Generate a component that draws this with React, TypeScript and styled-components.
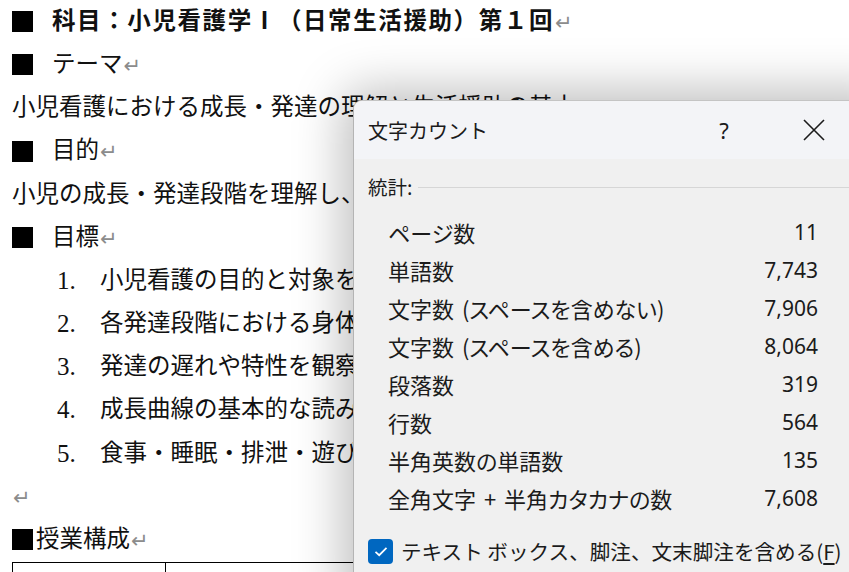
import React from 'react';
import styled, { createGlobalStyle } from 'styled-components';

const GlobalStyle = createGlobalStyle`
  html, body {
    margin: 0;
    padding: 0;
    background: #fff;
    overflow: hidden;
  }
`;

const Page = styled.div`
  position: relative;
  width: 849px;
  height: 572px;
  overflow: hidden;
  background: #fff;
`;

const Doc = styled.div`
  padding-left: 12px;
  font-family: 'Liberation Serif', 'Noto Sans CJK JP', serif;
  font-size: 23.5px;
  line-height: 43.17px;
  color: #111;
  white-space: nowrap;
`;

const Line = styled.div<{ bold?: boolean }>`
  display: flex;
  align-items: center;
  height: 43.17px;
  font-weight: ${({ bold }) => (bold ? 700 : 400)};
  letter-spacing: ${({ bold }) => (bold ? '1.6px' : '0')};
`;

const Mark = styled.span<{ tight?: boolean }>`
  display: inline-block;
  width: 21px;
  height: 21px;
  margin-right: ${({ tight }) => (tight ? '3px' : '19px')};
  font-size: 0;
  background: #000;
  color: transparent;
`;

const Ret = styled.span`
  font-family: 'DejaVu Sans', sans-serif;
  font-size: 21px;
  font-weight: 400;
  letter-spacing: 0;
  color: #8c8c8c;
  margin-left: 1px;
  position: relative;
  top: 2px;
`;

const Item = styled(Line)`
  padding-left: 45px;
`;

const Num = styled.span`
  display: inline-block;
  width: 43px;
  font-family: 'Liberation Serif', serif;
  font-size: 25px;
`;

const Table = styled.div`
  display: grid;
  grid-template-columns: 153px 560px;
  margin-top: 1px;
  border-top: 1.5px solid #000;
  border-left: 1.5px solid #000;
  height: 60px;
`;

const Cell = styled.div`
  border-right: 1.5px solid #000;
`;

const Dialog = styled.div`
  position: absolute;
  left: 353px;
  top: 100px;
  width: 530px;
  height: 500px;
  background: #f0f0f0;
  border-left: 1.5px solid #b4b4b4;
  border-top: 1px solid #c4c4c4;
  border-radius: 9px 0 0 0;
  box-shadow: 0 0 50px 10px rgba(0, 0, 0, 0.26);
  font-family: 'Noto Sans CJK JP', sans-serif;
  color: #1b1b1b;
  white-space: nowrap;
  overflow: hidden;
`;

const TitleBar = styled.div`
  display: flex;
  align-items: center;
  height: 58px;
  padding-left: 14px;
  background: #f3f4f7;
  font-size: 20px;
`;

const Title = styled.span`
  flex: 1;
`;

const TitleButton = styled.span`
  display: flex;
  align-items: center;
  justify-content: center;
  width: 46px;
  height: 46px;
  font-family: 'Noto Sans', sans-serif;
  font-size: 22px;
`;

const CloseButton = styled(TitleButton)`
  margin: 0 47px 0 44px;
`;

const Body = styled.div`
  padding: 11px 0 0 14px;
`;

const Section = styled.div`
  display: flex;
  align-items: center;
  gap: 6px;
  font-size: 19.5px;
  height: 32px;
`;

const Rule = styled.div`
  flex: 1;
  height: 1px;
  background: #d6d6d6;
  margin-top: 2px;
`;

const Stats = styled.div`
  display: grid;
  grid-template-columns: 1fr auto;
  grid-auto-rows: 38px;
  width: 430px;
  margin: 11px 0 0 20px;
  align-items: center;
  font-size: 22px;
  font-feature-settings: 'palt';
`;

const Label = styled.span`
  word-spacing: 3px;
`;

const Value = styled.span`
  font-family: 'Noto Sans', 'Open Sans', sans-serif;
  font-size: 21px;
  text-align: right;
`;

const Check = styled.label`
  display: flex;
  align-items: center;
  gap: 8px;
  margin-top: 19px;
  font-size: 20.6px;
`;

const Box = styled.span`
  display: flex;
  align-items: center;
  justify-content: center;
  width: 25px;
  height: 25px;
  border-radius: 4px;
  background: #0067c0;
`;

const U = styled.span`
  text-decoration: underline;
  text-underline-offset: 3px;
`;

const stats: [string, string][] = [
  ['ページ数', '11'],
  ['単語数', '7,743'],
  ['文字数 (スペースを含めない)', '7,906'],
  ['文字数 (スペースを含める)', '8,064'],
  ['段落数', '319'],
  ['行数', '564'],
  ['半角英数の単語数', '135'],
  ['全角文字 + 半角カタカナの数', '7,608'],
];

const goals = [
  '小児看護の目的と対象を理解する',
  '各発達段階における身体的・心理的特徴を説明できる',
  '発達の遅れや特性を観察する視点を学ぶ',
  '成長曲線の基本的な読み方を理解する',
  '食事・睡眠・排泄・遊びなどの日常生活援助を理解する',
];

export default function App() {
  return (
    <Page>
      <GlobalStyle />
      <Doc>
        <Line bold>
          <Mark>■</Mark>科目：小児看護学Ⅰ（日常生活援助）第１回<Ret>↵</Ret>
        </Line>
        <Line>
          <Mark>■</Mark>テーマ<Ret>↵</Ret>
        </Line>
        <Line>小児看護における成長・発達の理解と生活援助の基本<Ret>↵</Ret></Line>
        <Line>
          <Mark>■</Mark>目的<Ret>↵</Ret>
        </Line>
        <Line>小児の成長・発達段階を理解し、日常生活援助の基礎を学ぶ。<Ret>↵</Ret></Line>
        <Line>
          <Mark>■</Mark>目標<Ret>↵</Ret>
        </Line>
        {goals.map((g, i) => (
          <Item key={g}>
            <Num>{i + 1}.</Num>
            {g}
            <Ret>↵</Ret>
          </Item>
        ))}
        <Line>
          <Ret>↵</Ret>
        </Line>
        <Line>
          <Mark tight>■</Mark>授業構成<Ret>↵</Ret>
        </Line>
        <Table>
          <Cell />
          <Cell />
        </Table>
      </Doc>

      <Dialog>
        <TitleBar>
          <Title>文字カウント</Title>
          <TitleButton>?</TitleButton>
          <CloseButton>
            <svg width="22" height="22" viewBox="0 0 22 22">
              <path d="M1 1 L21 21 M21 1 L1 21" stroke="#1b1b1b" strokeWidth="1.6" />
            </svg>
          </CloseButton>
        </TitleBar>
        <Body>
          <Section>
            統計:
            <Rule />
          </Section>
          <Stats>
            {stats.map(([label, value]) => (
              <React.Fragment key={label}>
                <Label>{label}</Label>
                <Value>{value}</Value>
              </React.Fragment>
            ))}
          </Stats>
          <Check>
            <Box>
              <svg width="14" height="11" viewBox="0 0 14 11">
                <path d="M1.5 5.8 L5.2 9.2 L12.5 1.8" stroke="#fff" strokeWidth="1.7" fill="none" />
              </svg>
            </Box>
            <span>
              テキスト ボックス、脚注、文末脚注を含める(<U>F</U>)
            </span>
          </Check>
        </Body>
      </Dialog>
    </Page>
  );
}
